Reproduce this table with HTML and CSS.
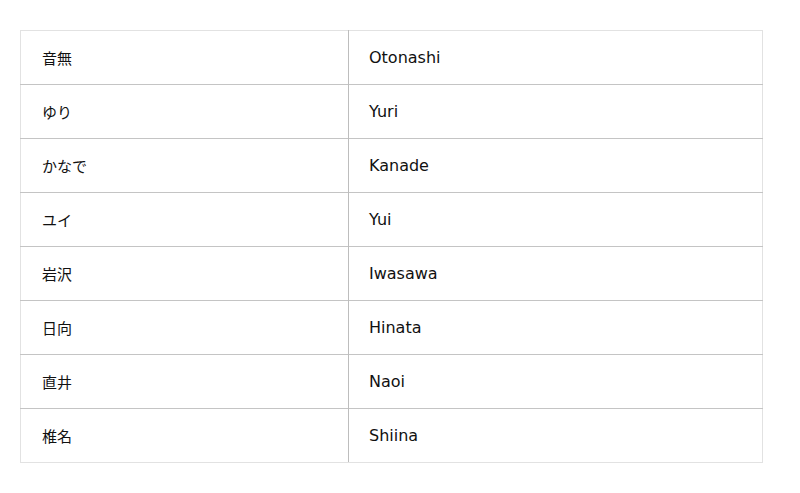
FILE: index.html
```html
<!DOCTYPE html>
<html lang="ja">
<head>
<meta charset="utf-8">
<link rel="stylesheet" href="styles.css">
</head>
<body>
<div class="page">
  <table class="names">
    <tbody>
      <tr><td class="ja">音無</td><td class="en">Otonashi</td></tr>
      <tr><td class="ja">ゆり</td><td class="en">Yuri</td></tr>
      <tr><td class="ja">かなで</td><td class="en">Kanade</td></tr>
      <tr><td class="ja">ユイ</td><td class="en">Yui</td></tr>
      <tr><td class="ja">岩沢</td><td class="en">Iwasawa</td></tr>
      <tr><td class="ja">日向</td><td class="en">Hinata</td></tr>
      <tr><td class="ja">直井</td><td class="en">Naoi</td></tr>
      <tr><td class="ja">椎名</td><td class="en">Shiina</td></tr>
    </tbody>
  </table>
</div>
</body>
</html>
```

FILE: styles.css
```css
html, body {
  margin: 0;
  padding: 0;
  background: #fff;
}
.page {
  padding: 30px 20px;
  font-family: "DejaVu Sans", "Noto Sans CJK JP", sans-serif;
  font-size: 16px;
  color: #111;
}
.names {
  width: 743px;
  border-collapse: collapse;
  border: 1px solid #e2e2e2;
}
.names td {
  height: 54px;
  padding: 0 0 0 20px;
  box-sizing: border-box;
  border-top: 1px solid #c4c4c4;
  vertical-align: middle;
  line-height: 20px;
}
.names tr:first-child td {
  border-top: 1px solid #e2e2e2;
}
.names tr:last-child td {
  border-bottom: 1px solid #e2e2e2;
}
.names td.ja {
  width: 328px;
  padding-left: 21px;
  border-right: 1px solid #bdbdbd;
  font-family: "Noto Sans CJK JP", sans-serif;
  font-size: 15px;
}
```
